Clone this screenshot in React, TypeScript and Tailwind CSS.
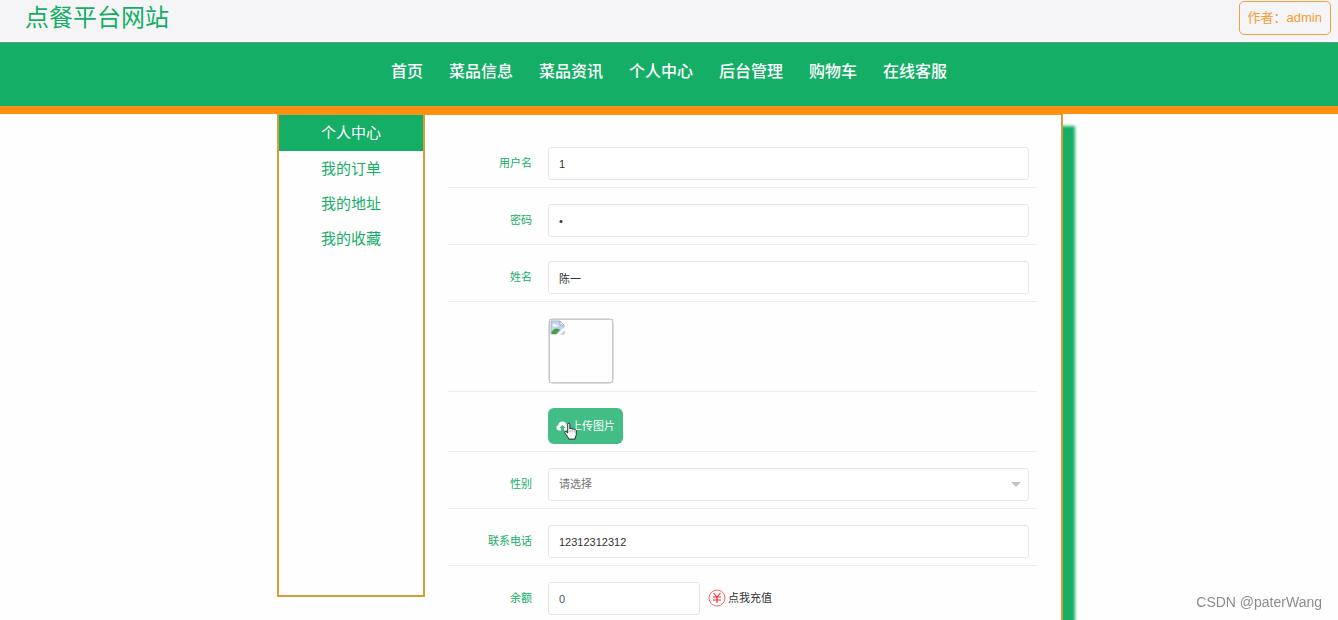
import { useState } from "react";
import type { ReactNode } from "react";

const NAV_ITEMS = ["首页", "菜品信息", "菜品资讯", "个人中心", "后台管理", "购物车", "在线客服"];

const MENU_ITEMS = ["个人中心", "我的订单", "我的地址", "我的收藏"];

const inputClass =
  "h-[33px] rounded-[3px] border border-[#e6e6e6] bg-white px-2.5 text-[11px] focus:outline-none";

function FormRow({ label, htmlFor, children }: { label?: string; htmlFor?: string; children: ReactNode }) {
  return (
    <div className="flex items-center border-b border-[#eee] pt-4 pr-2 pb-[7px]">
      <div className="mr-4 w-21 shrink-0 text-right text-[11px] text-[#15ae67]">
        {label && <label htmlFor={htmlFor}>{label}</label>}
      </div>
      <div className="relative flex min-w-0 flex-1 items-center">{children}</div>
    </div>
  );
}

// Empty avatar slot with the missing picture glyph
function AvatarPlaceholder() {
  return (
    <div className="h-[66px] w-[66px] rounded-md border border-[#dcdcdc]">
      <div className="h-16 w-16 border border-[#c8c8c8]">
        <svg width="15" height="15" viewBox="0 0 15 15" aria-hidden="true">
          <path d="M1 1h9l4 4v9H1z" fill="#c0d2f5" stroke="#b0b3ba" />
          <path d="M10 1v4h4z" fill="#fff" stroke="#a9adb3" />
          <path d="M3 6.500a1.500 1.500 0 0 1 2.500-2 1.800 1.800 0 0 1 2.500 2z" fill="#fff" />
          <path d="M1.500 13.500V12c1.500-2.500 3.500-3.500 5-3.500 2 0 3 1 3.500 1.500l-4 4H1.500z" fill="#46a03c" />
          <path d="M6.500 15L15 6.500V10l-5 5z" fill="#fff" />
        </svg>
      </div>
    </div>
  );
}

function UploadIcon() {
  return (
    <svg width="13" height="10" viewBox="0 0 13 10" aria-hidden="true">
      <path
        d="M5 9.500H3A2.900 2.900 0 0 1 2.300 3.900 4.200 4.200 0 0 1 10.500 3.600 3 3 0 0 1 10 9.500H8V7h1.500L6.500 3.800 3.500 7H5z"
        fill="#fff"
      />
    </svg>
  );
}

function HandCursor() {
  return (
    <svg className="absolute top-3.5 left-4" width="13" height="19" viewBox="0 0 14 20" aria-hidden="true">
      <path
        d="M4 2.300C4 .6 6.300.6 6.300 2.300v5c.3-1 2.300-.9 2.400.4.4-.9 2.200-.7 2.300.5.5-.7 2.200-.4 2.200 1v4.300c0 2-1.500 3-1.500 4.700H5.200c-.3-2-3-4.300-4.200-6.500-.8-1.500 1-2.500 2-1.200l1 1.200z"
        fill="#fff"
        stroke="#222"
        strokeLinejoin="round"
      />
      <path d="M6.500 8v3M8.700 8.500V11M11 9v2" stroke="#777" strokeWidth=".7" />
    </svg>
  );
}

function YuanIcon() {
  return (
    <svg className="mb-0.5" width="18" height="18" viewBox="0 0 18 18" fill="none" stroke="#f0282d" aria-hidden="true">
      <circle cx="9" cy="9" r="8" strokeWidth=".7" />
      <path d="M5.500 4L9 8 12.500 4M9 8v6M5 8h8M5 11h8" strokeWidth="1.100" />
    </svg>
  );
}

export default function App() {
  const [form, setForm] = useState({
    username: "1",
    password: "1",
    name: "陈一",
    gender: "",
    phone: "12312312312",
    balance: "0",
  });

  const update = (key: keyof typeof form, value: string) => {
    setForm(prev => ({ ...prev, [key]: value }));
  };

  return (
    <div className="flex min-h-screen flex-col overflow-hidden bg-[#fefefe] font-['Liberation_Sans','Noto_Sans_CJK_SC',sans-serif]">
      <header className="flex h-[42px] items-start justify-between bg-[#f5f4f6] pr-[7px] pl-[25px]">
        <h1 className="text-2xl leading-9 text-[#15ae67]">点餐平台网站</h1>
        <div className="mt-px flex h-[34px] items-center rounded-[5px] border border-[#f5a040] px-2 text-[13px] text-[#f79a30]">
          作者：admin
        </div>
      </header>

      <nav className="flex h-18 justify-center gap-[26px] border-t border-b-8 border-t-[#5fa088] border-b-[#ff9112] bg-[#15ae67] pt-[17px]">
        {NAV_ITEMS.map((item) => (
          <a key={item} href="#" className="text-base font-medium text-white">
            {item}
          </a>
        ))}
      </nav>

      <main className="mx-auto flex w-full max-w-[788px] flex-1 items-stretch border-r-2 border-[#d99b35] bg-[#fefefe] pl-0.5 shadow-[12px_12px_3px_#15ae67]">
        <aside className="h-[483px] w-37 shrink-0 border-2 border-t border-[#dc9c35]">
          <ul>
            {MENU_ITEMS.map((item, i) => (
              <li key={item}>
                <a
                  href="#"
                  className={`block text-center text-[15px] ${
                    i === 0 ? "h-9 bg-[#15ae67] leading-9 text-white" : "h-[35px] leading-[35px] text-[#15ae67]"
                  }`}
                >
                  {item}
                </a>
              </li>
            ))}
          </ul>
        </aside>

        <form className="min-w-0 flex-1 border-t border-[#ff9112] pt-4 pr-6 pl-[23px]">
          <FormRow label="用户名" htmlFor="username">
            <input
              id="username"
              type="text"
              value={form.username}
              onChange={(e) => update("username", e.target.value)}
              className={`${inputClass} w-full text-[#333]`}
            />
          </FormRow>
          <FormRow label="密码" htmlFor="password">
            <input
              id="password"
              type="password"
              value={form.password}
              onChange={(e) => update("password", e.target.value)}
              className={`${inputClass} w-full text-[#333]`}
            />
          </FormRow>
          <FormRow label="姓名" htmlFor="name">
            <input
              id="name"
              type="text"
              value={form.name}
              onChange={(e) => update("name", e.target.value)}
              className={`${inputClass} w-full text-[#333]`}
            />
          </FormRow>
          <FormRow>
            <AvatarPlaceholder />
          </FormRow>
          <FormRow>
            <button
              type="button"
              className="flex h-9 items-center gap-0.5 rounded-md bg-[#41bd85] px-2 text-[11px] text-white"
            >
              <UploadIcon />
              上传图片
            </button>
            <HandCursor />
          </FormRow>
          <FormRow label="性别" htmlFor="gender">
            <select
              id="gender"
              value={form.gender}
              onChange={(e) => update("gender", e.target.value)}
              className={`${inputClass} w-full appearance-none text-[#757575]`}
            >
              <option value="">请选择</option>
              <option value="男">男</option>
              <option value="女">女</option>
            </select>
            <span className="pointer-events-none absolute right-2 border-x-5 border-t-5 border-x-transparent border-t-[#c2c2c2]" />
          </FormRow>
          <FormRow label="联系电话" htmlFor="phone">
            <input
              id="phone"
              type="text"
              value={form.phone}
              onChange={(e) => update("phone", e.target.value)}
              className={`${inputClass} w-full text-[#333]`}
            />
          </FormRow>
          <FormRow label="余额" htmlFor="balance">
            <input
              id="balance"
              type="text"
              value={form.balance}
              onChange={(e) => update("balance", e.target.value)}
              className={`${inputClass} w-38 text-[#555]`}
            />
            <a href="#" className="ml-2 flex items-center gap-0.5 text-[11px] text-[#333]">
              <YuanIcon />
              点我充值
            </a>
          </FormRow>
        </form>
      </main>

      <div className="pointer-events-none fixed right-4 bottom-2 text-sm text-[#8c8c8c]">CSDN @paterWang</div>
    </div>
  );
}
